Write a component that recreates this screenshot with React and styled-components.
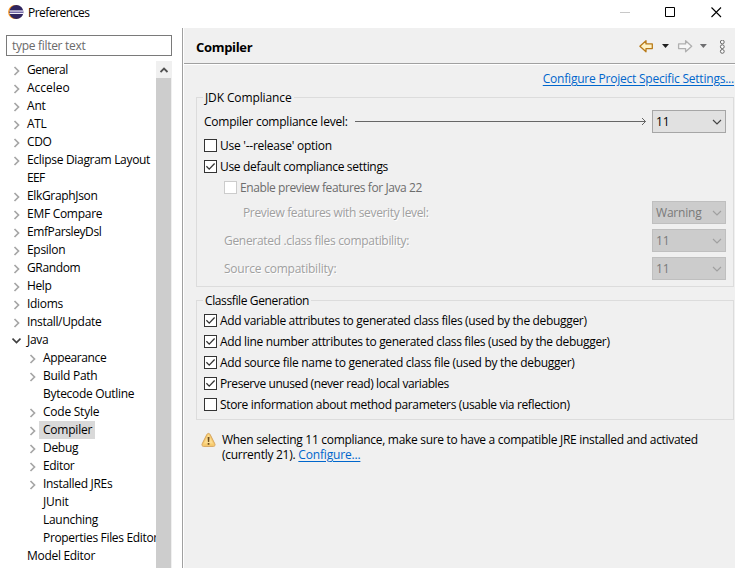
import React from 'react';
import styled, { createGlobalStyle } from 'styled-components';

const GlobalStyle = createGlobalStyle`
  *, *::before, *::after { box-sizing: border-box; }
  body { margin: 0; background: #fff; overflow: hidden; }
`;

const Window = styled.div`
  display: flex;
  flex-direction: column;
  width: 735px;
  height: 568px;
  overflow: hidden;
  background: #fff;
  color: #000;
  font: 12px/15px "Open Sans", "Noto Sans", sans-serif;
  white-space: nowrap;
`;

const Text = styled.span`
  display: inline-block;
  letter-spacing: ${(p) => p.$track ?? -0.3}px;
`;

/* ---------- title bar ---------- */
const TitleBar = styled.header`
  display: flex;
  flex: none;
  height: 28px;
  padding: 4px 13px 0 8px;
`;
const Title = styled.div`
  flex: 1;
  padding: 1px 0 0 4px;
`;
const WindowButtons = styled.div`
  display: flex;
  gap: 34px;
  padding-top: 2px;
`;

/* ---------- sidebar ---------- */
const Body = styled.div`
  display: flex;
  flex: 1;
  min-height: 0;
`;
const Sidebar = styled.aside`
  display: flex;
  flex-direction: column;
  flex: none;
  width: 184px;
  padding: 7px 10px 0 6px;
  border-right: 1px solid #fff;
  box-shadow: inset -1px 0 #a0a0a0;
`;
const Filter = styled.div`
  flex: none;
  width: 166px;
  height: 21px;
  padding: 2px 5px;
  border: 1px solid #7a7a7a;
  color: #6a6a6a;
`;
const TreePane = styled.div`
  display: flex;
  flex: 1;
  min-height: 0;
  width: 166px;
  margin-top: 5px;
`;
const Tree = styled.div`
  flex: 1;
  min-width: 0;
  overflow: hidden;
`;
const TreeRow = styled.div`
  display: flex;
  align-items: center;
  height: 18px;
  padding-left: ${(p) => (p.$level ? 22 : 6)}px;
`;
const Twisty = styled.span`
  display: flex;
  flex: none;
  width: 11px;
  padding-top: 2px;
`;
const TreeLabel = styled(Text)`
  height: 18px;
  padding: 1px 3px 0 4px;
  background: ${(p) => (p.$selected ? '#d9d9d9' : 'transparent')};
`;
const ScrollBar = styled.div`
  display: flex;
  flex-direction: column;
  flex: none;
  width: 16px;
  background: #f0f0f0;
`;
const ScrollUp = styled.div`
  display: flex;
  align-items: center;
  justify-content: center;
  height: 17px;
`;
const ScrollThumb = styled.div`
  flex: 1;
  width: 15px;
  background: #cdcdcd;
`;

/* ---------- page ---------- */
const Page = styled.main`
  flex: 1;
  min-width: 0;
  background: #f0f0f0;
`;
const PageHeader = styled.div`
  display: flex;
  height: 36px;
  padding: 12px 8px 0 12px;
  border-bottom: 1px solid #a0a0a0;
  box-shadow: 0 1px #fff;
`;
const PageTitle = styled.h1`
  flex: 1;
  margin: 0;
  font-size: 13px;
  line-height: 15px;
  font-weight: 700;
  letter-spacing: -0.32px;
`;
const Link = styled.a`
  display: inline-block;
  color: #0066cc;
  text-decoration: underline;
  text-underline-offset: 2px;
  letter-spacing: ${(p) => p.$track}px;
`;
const LinkRow = styled.div`
  display: flex;
  justify-content: flex-end;
  height: 26px;
  padding: 7px 1px 0 0;
`;
const Group = styled.fieldset`
  width: 538px;
  height: ${(p) => p.$height}px;
  margin: 0 0 6px 12px;
  padding: 0;
  border: 0;
  display: flex;
  flex-direction: column;
  background:
    linear-gradient(#dcdcdc, #dcdcdc) 0 100% / 100% 1px no-repeat,
    linear-gradient(#dcdcdc, #dcdcdc) 0 7px / 1px 100% no-repeat,
    linear-gradient(#dcdcdc, #dcdcdc) 100% 7px / 1px 100% no-repeat;
`;
const GroupTitle = styled.div`
  display: flex;
  align-items: center;
  flex: none;
  height: 15px;
  margin-bottom: ${(p) => p.$space}px;
  &::before { content: ''; width: 7px; height: 1px; background: #dcdcdc; margin-right: 2px; }
  &::after { content: ''; flex: 1; height: 1px; background: #dcdcdc; margin-left: 2px; }
`;
const Field = styled.div`
  display: flex;
  align-items: center;
  flex: none;
  height: 27px;
  margin-top: ${(p) => p.$space ?? 0}px;
  padding: 0 8px 0 ${(p) => p.$indent ?? 8}px;
  justify-content: space-between;
`;
const FieldLabel = styled(Text)`
  color: ${(p) => (p.$off ? '#a0a0a0' : '#000')};
  text-shadow: ${(p) => (p.$off ? '1px 1px #fff' : 'none')};
`;
const Select = styled.div`
  display: flex;
  align-items: center;
  justify-content: space-between;
  width: 74px;
  height: 23px;
  padding: 0 3px;
  border: 1px solid ${(p) => (p.$off ? '#bfbfbf' : '#a6a6a6')};
  background: ${(p) => (p.$off ? '#cccccc' : '#e1e1e1')};
  color: ${(p) => (p.$off ? '#7a7a7a' : '#000')};
`;
const CheckRow = styled.label`
  display: flex;
  align-items: center;
  flex: none;
  gap: 3px;
  height: 21px;
  padding-left: ${(p) => p.$indent ?? 8}px;
  color: ${(p) => (p.$off ? '#6d6d6d' : '#000')};
`;
const Box = styled.span`
  display: flex;
  flex: none;
  width: 13px;
  height: 13px;
  border: 1px solid ${(p) => (p.$off ? '#cccccc' : '#333')};
  background: #fff;
`;
const Notice = styled.div`
  display: flex;
  gap: 6px;
  padding: 6px 0 0 17px;
`;
const NoticeLine = styled.div`
  display: flex;
  gap: 3px;
  height: 15px;
`;
const ArrowSvg = styled.svg`
  margin-left: 2px;
`;

/* ---------- drawings ---------- */
const EclipseLogo = () => (
  <svg width="16" height="16" viewBox="0 0 16 16">
    <circle cx="7.2" cy="8" r="7.1" fill="#f7941e" />
    <circle cx="8.4" cy="8" r="7" fill="#2f2560" />
    <path d="M2 6.5h13.2v3H2z" fill="#7268a6" />
    <path d="M1.5 7h14M1.5 9.5h14" stroke="#f3f1fa" />
  </svg>
);
const Minimize = () => (
  <svg width="11" height="11"><path d="M0 6.5h10" stroke="#c8c8c8" /></svg>
);
const Maximize = () => (
  <svg width="12" height="12"><path d="M.5 1.5h9v9h-9z" fill="none" stroke="#000" /></svg>
);
const Close = () => (
  <svg width="11" height="12"><path d="M.5 1.5l9.5 9.5M10 1.5L.5 11" stroke="#000" strokeWidth="1.1" /></svg>
);
const Chevron = ({ open }) =>
  open ? (
    <svg width="9" height="8"><path d="M.5 1.5l4 4 4-4" fill="none" stroke="#404040" strokeWidth="1.7" /></svg>
  ) : (
    <svg width="9" height="10"><path d="M2.5 1l4 4-4 4" fill="none" stroke="#a6a6a6" strokeWidth="1.7" /></svg>
  );
const ScrollArrow = () => (
  <svg width="9" height="6"><path d="M.5 5l3.5-3.5L7.5 5" fill="none" stroke="#505050" strokeWidth="1.8" /></svg>
);
const SelectArrow = ({ off }) => (
  <svg width="10" height="6"><path d="M1 1l4 4 4-4" fill="none" stroke={off ? '#a0a0a0' : '#444'} strokeWidth="1.15" /></svg>
);
const Check = () => (
  <svg width="11" height="11"><path d="M1.4 5.3l2.8 2.8 5.4-5.6" fill="none" stroke="#333" strokeWidth="1.3" /></svg>
);
const Toolbar = () => (
  <svg width="90" height="16" viewBox="0 0 90 16">
    <path d="M2.9 6.2L9 .7v3.2h6.3v4.7H9v3.2z" fill="#fff2c4" stroke="#b87a18" strokeWidth="1.3" strokeLinejoin="round" />
    <path d="M25 4h7l-3.5 4z" fill="#202020" />
    <path d="M54.7 6.2L48.6.7v3.2h-7v4.7h7v3.2z" fill="#f7f7f7" stroke="#b0b0b0" strokeWidth="1.3" strokeLinejoin="round" />
    <path d="M62.9 4h7l-3.5 4z" fill="#6e6e70" />
    <g fill="#fafafa" stroke="#686868">
      <circle cx="85.3" cy="2" r="1.9" />
      <circle cx="85.3" cy="6.7" r="1.9" />
      <circle cx="85.3" cy="11.4" r="1.9" />
    </g>
  </svg>
);
const LongArrow = () => (
  <ArrowSvg width="292" height="9">
    <path d="M0 4.5h290.5" stroke="#666" />
    <path d="M287 1l3.5 3.5L287 8" fill="none" stroke="#666" />
  </ArrowSvg>
);
const Warning = () => (
  <svg width="15" height="16" viewBox="0 0 15 16">
    <path d="M7.5 1.4c.8 0 1.3.5 1.7 1.2l4.6 9.2c.7 1.4 0 2.6-1.4 2.6H2.6c-1.4 0-2.1-1.2-1.4-2.6l4.6-9.2c.4-.7.9-1.2 1.7-1.2z" fill="#f8cc70" stroke="#d6a560" />
    <path d="M7.5 2.5L3 11.5h9z" fill="#fde3a0" opacity=".7" />
    <path d="M6.6 5h1.9l-.3 5H6.9zM6.7 11h1.7v1.7H6.7z" fill="#6b4a1c" />
  </svg>
);

/* ---------- data ---------- */
const LEAF = 'leaf';
const OPEN = 'open';
const tree = [
  ['General', -0.5], ['Acceleo', 0.0], ['Ant', -0.2], ['ATL', -0.3], ['CDO', -0.4],
  ['Eclipse Diagram Layout', -0.31], ['EEF', -0.7, 0, LEAF], ['ElkGraphJson', -0.34],
  ['EMF Compare', -0.28], ['EmfParsleyDsl', -0.4], ['Epsilon', -0.3], ['GRandom', -0.35],
  ['Help', -0.4], ['Idioms', -0.3], ['Install/Update', -0.33], ['Java', -0.3, 0, OPEN],
  ['Appearance', -0.38, 1], ['Build Path', -0.28, 1], ['Bytecode Outline', -0.3, 1, LEAF],
  ['Code Style', -0.24, 1], ['Compiler', -0.22, 1], ['Debug', -0.3, 1], ['Editor', -0.35, 1],
  ['Installed JREs', -0.31, 1], ['JUnit', -0.2, 1, LEAF], ['Launching', -0.3, 1, LEAF],
  ['Properties Files Editor', -0.33, 1, LEAF], ['Model Editor', -0.3, 0, LEAF],
];
const classfileOptions = [
  ['Add variable attributes to generated class files (used by the debugger)', -0.33, true],
  ['Add line number attributes to generated class files (used by the debugger)', -0.326, true],
  ['Add source file name to generated class file (used by the debugger)', -0.303, true],
  ['Preserve unused (never read) local variables', -0.405, true],
  ['Store information about method parameters (usable via reflection)', -0.35, false],
];

const Option = ({ label, track, checked, off, indent }) => (
  <CheckRow $indent={indent} $off={off}>
    <Box $off={off}>{checked && <Check />}</Box>
    <Text $track={track}>{label}</Text>
  </CheckRow>
);
const Combo = ({ value, off }) => (
  <Select $off={off}>
    <Text $track={-0.2}>{value}</Text>
    <SelectArrow off={off} />
  </Select>
);

export default function App() {
  return (
    <>
      <GlobalStyle />
      <Window>
        <TitleBar>
          <EclipseLogo />
          <Title><Text $track={-0.5}>Preferences</Text></Title>
          <WindowButtons><Minimize /><Maximize /><Close /></WindowButtons>
        </TitleBar>
        <Body>
          <Sidebar>
            <Filter><Text $track={-0.3}>type filter text</Text></Filter>
            <TreePane>
              <Tree>
                {tree.map(([name, track, level, kind]) => (
                  <TreeRow key={name} $level={level}>
                    <Twisty>{kind !== LEAF && <Chevron open={kind === OPEN} />}</Twisty>
                    <TreeLabel $track={track} $selected={name === 'Compiler'}>{name}</TreeLabel>
                  </TreeRow>
                ))}
              </Tree>
              <ScrollBar>
                <ScrollUp><ScrollArrow /></ScrollUp>
                <ScrollThumb />
              </ScrollBar>
            </TreePane>
          </Sidebar>
          <Page>
            <PageHeader>
              <PageTitle>Compiler</PageTitle>
              <Toolbar />
            </PageHeader>
            <LinkRow>
              <Link $track={-0.215}>Configure Project Specific Settings...</Link>
            </LinkRow>
            <Group $height={197}>
              <GroupTitle $space={3}><Text $track={-0.12}>JDK Compliance</Text></GroupTitle>
              <Field>
                <FieldLabel $track={-0.24}>Compiler compliance level:</FieldLabel>
                <LongArrow />
                <Combo value="11" />
              </Field>
              <Option label="Use '--release' option" track={-0.25} />
              <Option label="Use default compliance settings" track={-0.31} checked />
              <Option label="Enable preview features for Java 22" track={-0.41} off indent={28} />
              <Field $indent={47} $space={1}>
                <FieldLabel $off $track={-0.36}>Preview features with severity level:</FieldLabel>
                <Combo value="Warning" off />
              </Field>
              <Field $indent={28} $space={1}>
                <FieldLabel $off $track={-0.315}>Generated .class files compatibility:</FieldLabel>
                <Combo value="11" off />
              </Field>
              <Field $indent={28} $space={1}>
                <FieldLabel $off $track={-0.22}>Source compatibility:</FieldLabel>
                <Combo value="11" off />
              </Field>
            </Group>
            <Group $height={127}>
              <GroupTitle $space={2}><Text $track={-0.38}>Classfile Generation</Text></GroupTitle>
              {classfileOptions.map(([label, track, checked]) => (
                <Option key={label} label={label} track={track} checked={checked} />
              ))}
            </Group>
            <Notice>
              <Warning />
              <div>
                <NoticeLine>
                  <Text $track={-0.305}>When selecting 11 compliance, make sure to have a compatible JRE installed and activated</Text>
                </NoticeLine>
                <NoticeLine>
                  <Text $track={-0.27}>(currently 21).</Text>
                  <Link $track={-0.18}>Configure...</Link>
                </NoticeLine>
              </div>
            </Notice>
          </Page>
        </Body>
      </Window>
    </>
  );
}
